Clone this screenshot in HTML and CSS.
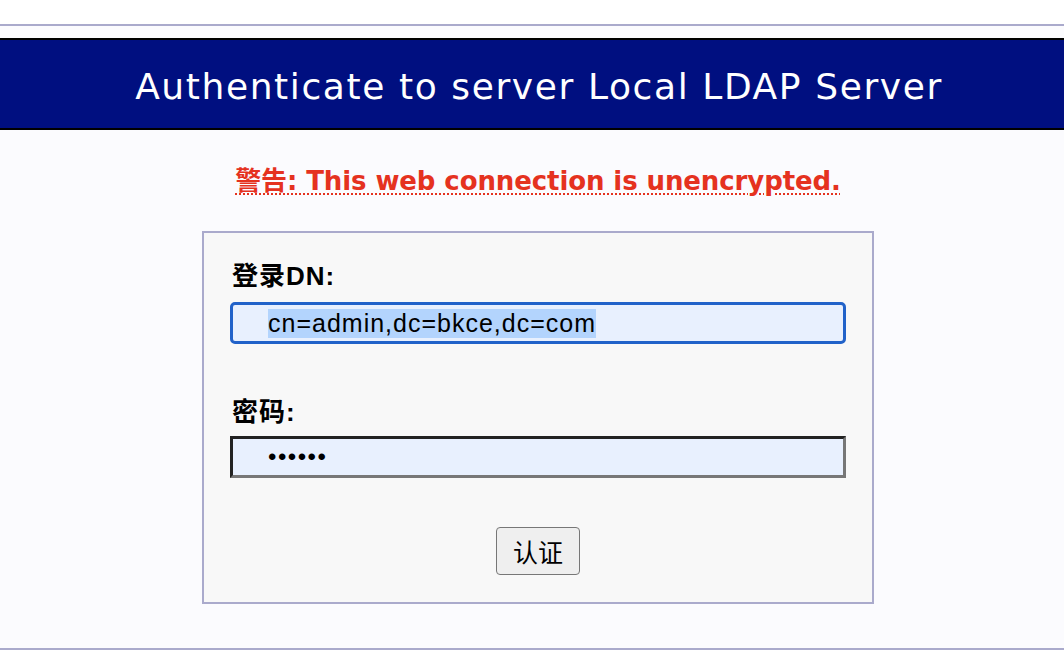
FILE: index.html
```html
<!DOCTYPE html>
<html lang="zh">
<head>
<meta charset="utf-8">
<title>Authenticate</title>
<link rel="stylesheet" href="styles.css">
</head>
<body>
<div class="topbar"></div>
<div class="page">
  <h1 class="header"><span class="header-text">Authenticate to server Local LDAP Server</span></h1>
  <div class="content">
    <p class="warning"><abbr class="warn-abbr">警告: This web connection is unencrypted.</abbr></p>
    <form class="login-box">
      <label class="field-label" for="dn">登录DN:</label>
      <input class="field dn-field" id="dn" type="text" value="cn=admin,dc=bkce,dc=com">
      <label class="field-label pw-label" for="pw">密码:</label>
      <input class="field pw-field" id="pw" type="password" value="secret">
      <div class="actions"><button class="submit" type="button">认证</button></div>
    </form>
  </div>
  <div class="bottom-line"></div>
</div>
<script src="script.js"></script>
</body>
</html>
```

FILE: styles.css
```css
html, body {
  margin: 0;
  padding: 0;
}
body {
  background: #fbfbfe;
  font-family: "Liberation Sans", "Noto Sans CJK SC", sans-serif;
  height: 650px;
  overflow: hidden;
}
.topbar {
  height: 24px;
  background: #ffffff;
  border-bottom: 2px solid #aaaacc;
}
.page {
  padding-top: 12px;
}
.header {
  margin: 0;
  background: #000f80;
  border-top: 2px solid #000;
  border-bottom: 2px solid #000;
  height: 88px;
  display: flex;
  align-items: center;
  justify-content: center;
  padding-left: 14px;
  color: #fff;
  font-family: "DejaVu Sans", "Noto Sans CJK SC", sans-serif;
  font-weight: normal;
  font-size: 36px;
  letter-spacing: 1.6px;
}
.header-text {
  position: relative;
  top: 2px;
}
.content {
  padding-left: 12px;
}
.warning {
  margin: 35px 0 0 0;
  text-align: center;
  color: #e5321f;
  font-family: "DejaVu Sans", "Noto Sans CJK SC", sans-serif;
  font-weight: bold;
  font-size: 26px;
  line-height: 32px;
  letter-spacing: -0.1px;
}
.warn-abbr {
  text-decoration: underline dotted;
  text-underline-offset: 3px;
  text-decoration-thickness: 2px;
}
.login-box {
  width: 616px;
  margin: 34px auto 0 auto;
  border: 2px solid #aaaacc;
  background: #f8f8f8;
  padding: 29px 26px 27px 26px;
  display: flex;
  flex-direction: column;
}
.field-label {
  font-weight: bold;
  font-size: 26px;
  line-height: 28px;
  letter-spacing: 1px;
  color: #000;
  padding-left: 2px;
}
.field {
  box-sizing: border-box;
  width: 616px;
  height: 42px;
  margin: 12px 0 0 0;
  padding: 0 0 0 35px;
  background: #e8f0fe;
  font-family: "Liberation Sans", sans-serif;
  font-size: 25px;
  letter-spacing: 1px;
  color: #000;
  outline: none;
}
.dn-field {
  border: 3px solid #2162c9;
  border-radius: 5px;
}
.dn-field::selection {
  background: #b3d4fd;
  color: #000;
}
.pw-field {
  border-style: solid;
  border-width: 3px;
  border-color: #222 #777 #777 #222;
  border-radius: 0;
  margin-top: 10px;
  font-size: 24px;
  letter-spacing: 1.5px;
}
.pw-label {
  margin-top: 54px;
}
.actions {
  display: flex;
  justify-content: center;
  margin-top: 49px;
}
.submit {
  width: 84px;
  height: 48px;
  border: 1px solid #777;
  border-radius: 4px;
  background: #efefef;
  font-family: "Noto Sans CJK SC", sans-serif;
  font-size: 25px;
  color: #000;
  padding: 0;
}
.bottom-line {
  margin-top: 44px;
  border-bottom: 2px solid #aaaacc;
}
```

FILE: script.js
```js
var dn = document.getElementById('dn');
dn.focus();
dn.setSelectionRange(0, dn.value.length);
```
